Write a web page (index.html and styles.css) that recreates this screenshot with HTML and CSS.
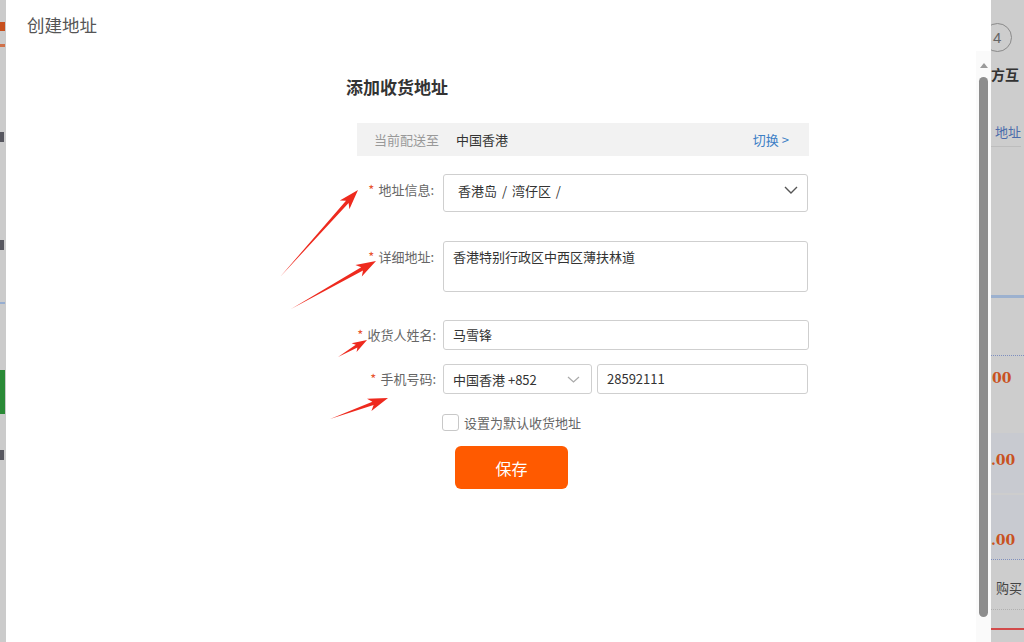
FILE: index.html
```html
<!DOCTYPE html>
<html lang="zh-CN">
<head>
<meta charset="utf-8">
<title>创建地址</title>
<link rel="stylesheet" href="styles.css">
</head>
<body>
<div class="page">
  <div class="bg-left">
    <div class="bl-orange1"></div>
    <div class="bl-orange2"></div>
    <div class="bl-mark bl-m1"></div>
    <div class="bl-mark bl-m2"></div>
    <div class="bl-blue"></div>
    <div class="bl-green"></div>
    <div class="bl-mark bl-m3"></div>
  </div>

  <div class="modal">
    <div class="modal-main">
      <div class="modal-title">创建地址</div>
      <div class="form">
        <h2 class="form-heading">添加收货地址</h2>
        <div class="ship-bar">
          <span class="ship-label">当前配送至</span>
          <span class="ship-value">中国香港</span>
          <span class="ship-switch">切换 &gt;</span>
        </div>

        <div class="row row-region">
          <label class="lbl"><span class="star">*</span>地址信息:</label>
          <div class="box box-select">
            <span class="region-text">香港岛 <span class="sep">/</span> 湾仔区 <span class="sep">/</span></span>
            <svg class="chev" width="14" height="8" viewBox="0 0 14 8"><path d="M1 1 L7 7 L13 1" fill="none" stroke="#555" stroke-width="1.4"/></svg>
          </div>
        </div>

        <div class="row row-detail">
          <label class="lbl"><span class="star">*</span>详细地址:</label>
          <div class="box box-area">香港特别行政区中西区薄扶林道</div>
        </div>

        <div class="row row-name">
          <label class="lbl"><span class="star">*</span>收货人姓名:</label>
          <div class="box box-input">马雪锋</div>
        </div>

        <div class="row row-phone">
          <label class="lbl"><span class="star">*</span>手机号码:</label>
          <div class="phone">
            <div class="box box-code">
              <span>中国香港 +852</span>
              <svg class="chev" width="13" height="7" viewBox="0 0 13 7"><path d="M1 1 L6.5 6 L12 1" fill="none" stroke="#aaa" stroke-width="1.2"/></svg>
            </div>
            <div class="box box-num">28592111</div>
          </div>
        </div>

        <div class="row row-check">
          <span></span>
          <div class="check-wrap"><span class="checkbox"></span><span class="check-text">设置为默认收货地址</span></div>
        </div>

        <div class="row row-btn">
          <span></span>
          <div><button class="save">保存</button></div>
        </div>
      </div>
    </div>
    <div class="scroll">
      <div class="scroll-arrow"></div>
      <div class="scroll-thumb"></div>
    </div>
  </div>

  <div class="bg-right">
    <div class="br-circle-row"><span class="br-circle">4</span></div>
    <div class="br-bold">方互</div>
    <div class="br-link">地址</div>
    <div class="br-line"></div>
    <div class="br-blueline"></div>
    <div class="br-dots br-dots1"></div>
    <div class="br-price br-p1">00</div>
    <div class="br-cell br-cell1"><span class="br-price">.00</span></div>
    <div class="br-cell br-cell2"><span class="br-price">.00</span></div>
    <div class="br-dots br-dots2"></div>
    <div class="br-buy">购买</div>
    <div class="br-dots br-dots3"></div>
    <div class="br-red"></div>
  </div>
</div>

<svg class="arrows" width="1024" height="642" viewBox="0 0 1024 642">
  <g fill="#ee2a1e">
    <polygon points="280,277 348.6,203.1 349.4,209.2 358,190 339.8,200.6 346.0,200.7"/>
    <polygon points="291,309 363.0,270.5 361.8,276.5 376,261 355.4,265.1 361.2,267.3"/>
    <polygon points="338,357 357.4,347.4 356.6,351.9 367,340 351.6,343.3 355.8,344.8"/>
    <polygon points="330,419 373.6,405.1 371.4,410.9 388,398 367.0,398.7 372.4,401.7"/>
  </g>
</svg>
</body>
</html>
```

FILE: styles.css
```css
* { box-sizing: border-box; }
html, body {
  margin: 0;
  padding: 0;
  width: 1024px;
  height: 642px;
  overflow: hidden;
}
body {
  font-family: "Noto Sans CJK SC", "Noto Sans", "Liberation Sans", sans-serif;
  color: #333;
  position: relative;
}
.page {
  display: flex;
  height: 642px;
  background: #cdcdcd;
}

/* left background strip */
.bg-left {
  width: 6px;
  flex: none;
  background: #cbcbcb;
  display: flex;
  flex-direction: column;
  overflow: hidden;
}
.bl-orange1 { width: 5px; height: 9px; margin-top: 22px; background: #c8501e; }
.bl-orange2 { width: 5px; height: 3px; margin-top: 13px; background: #d0714a; }
.bl-mark { width: 4px; height: 10px; background: #3a3a44; opacity: 0.8; }
.bl-m1 { margin-top: 85px; }
.bl-m2 { margin-top: 98px; }
.bl-blue { width: 5px; height: 2px; margin-top: 52px; background: #97aed0; }
.bl-green { width: 5px; height: 44px; margin-top: 66px; background: #2a8a36; }
.bl-m3 { margin-top: 36px; }

/* modal */
.modal {
  width: 985px;
  flex: none;
  background: #fff;
  display: flex;
}
.modal-main {
  flex: 1;
  padding: 14px 0 0 21px;
}
.modal-title {
  font-size: 17.5px;
  line-height: 22px;
  color: #555;
}
.form {
  margin-left: 319px;
  width: 464px;
}
.form-heading {
  margin: 39px 0 0 0;
  font-size: 17px;
  line-height: 24px;
  font-weight: bold;
  color: #333;
}
.ship-bar {
  margin: 24px 0 0 11px;
  width: 452px;
  height: 33px;
  background: #f2f2f2;
  display: flex;
  align-items: center;
  padding: 0 20px 0 17px;
  font-size: 13px;
}
.ship-label { color: #999; }
.ship-value { color: #333; margin-left: 17px; }
.ship-switch { color: #3d7fc6; margin-left: auto; }

.row {
  display: grid;
  grid-template-columns: 90px 366px;
  column-gap: 7px;
}
.lbl {
  text-align: right;
  font-size: 13px;
  line-height: 20px;
  color: #666;
  white-space: nowrap;
}
.star { color: #e8552f; margin-right: 4px; }
.row-region { margin-top: 18px; }
.row-region .lbl { padding-top: 6px; padding-right: 2px; }
.row-detail { margin-top: 29px; }
.row-detail .lbl { padding-top: 6px; padding-right: 2px; }
.row-name { margin-top: 28px; align-items: center; }
.row-name .lbl { margin-left: -10px; }
.row-phone { margin-top: 14px; align-items: center; }
.row-check { margin-top: 19px; }
.row-btn { margin-top: 14px; }

.box {
  border: 1px solid #cfcfcf;
  border-radius: 3px;
  font-size: 13px;
  color: #333;
  background: #fff;
}
.box-select {
  width: 365px;
  height: 38px;
  display: flex;
  align-items: center;
  padding: 0 9px 6px 14px;
}
.region-text { white-space: nowrap; }
.sep { margin: 0 2px; }
.chev { margin-left: auto; }
.box-area {
  width: 365px;
  height: 51px;
  padding: 5px 9px;
  line-height: 20px;
}
.box-input {
  width: 366px;
  height: 30px;
  line-height: 28px;
  padding: 0 9px;
}
.phone {
  display: flex;
  gap: 5px;
  width: 365px;
}
.box-code {
  width: 149px;
  height: 30px;
  display: flex;
  align-items: center;
  padding: 0 11px 0 9px;
}
.box-num {
  flex: 1;
  height: 30px;
  line-height: 28px;
  padding: 0 9px;
}
.check-wrap {
  display: flex;
  align-items: center;
  margin-left: -1px;
}
.checkbox {
  width: 17px;
  height: 17px;
  border: 1px solid #c8c8c8;
  border-radius: 3px;
  background: #fff;
}
.check-text {
  margin-left: 5px;
  font-size: 13px;
  color: #666;
}
.save {
  margin-left: 12px;
  width: 113px;
  height: 43px;
  border: none;
  border-radius: 6px;
  background: #ff5a00;
  color: #fff;
  font-family: inherit;
  font-size: 16px;
  padding: 0;
}

/* scrollbar */
.scroll {
  width: 15px;
  flex: none;
  margin-top: 51px;
  background: #fafafa;
  display: flex;
  flex-direction: column;
  align-items: center;
}
.scroll-arrow {
  margin-top: 12px;
  width: 0;
  height: 0;
  border-left: 4px solid transparent;
  border-right: 4px solid transparent;
  border-bottom: 5px solid #9a9a9a;
}
.scroll-thumb {
  margin-top: 9px;
  width: 9px;
  height: 540px;
  border-radius: 5px;
  background: #8d8d8d;
}

/* right background strip */
.bg-right {
  flex: 1;
  overflow: hidden;
  display: flex;
  flex-direction: column;
  background: #cdcdcd;
  position: relative;
}
.br-circle-row { height: 50px; padding-top: 23px; }
.br-circle {
  display: block;
  width: 29px;
  height: 29px;
  margin-left: -8px;
  border: 1px solid #8a8a8a;
  border-radius: 50%;
  font-family: "Liberation Sans", sans-serif;
  font-size: 15px;
  line-height: 27px;
  color: #666;
  padding-left: 9px;
}
.br-bold {
  margin-top: 14px;
  font-size: 14px;
  font-weight: bold;
  color: #333;
  line-height: 20px;
  white-space: nowrap;
}
.br-link {
  margin-top: 39px;
  font-size: 13px;
  color: #4b6cab;
  line-height: 18px;
  white-space: nowrap;
  margin-left: 4px;
}
.br-line { margin-top: 5px; height: 1px; width: 30px; background: #bdbdbd; }
.br-blueline { margin-top: 148px; height: 3px; background: #9cb1cf; }
.br-dots { height: 1px; border-top: 1px dotted #7e8fc0; }
.br-dots1 { margin-top: 57px; }
.br-price {
  font-family: "DejaVu Serif", "Liberation Serif", serif;
  font-weight: bold;
  font-size: 14px;
  color: #c9521f;
  line-height: 18px;
  white-space: nowrap;
}
.br-p1 { margin-top: 13px; margin-left: 1px; }
.br-cell {
  background: #c8cad0;
  margin-top: 3px;
}
.br-cell1 { margin-top: 46px; height: 60px; padding-top: 13px; margin-left: 0; }
.br-cell2 { height: 64px; padding-top: 31px; margin-top: 2px; }
.br-dots2 { margin-top: 0; }
.br-buy {
  margin-top: 19px;
  margin-left: 5px;
  font-size: 13px;
  color: #444;
  line-height: 18px;
  white-space: nowrap;
}
.br-dots3 { margin-top: 12px; border-top-color: #b0b0b0; }
.br-red { margin-top: 18px; height: 2px; background: #d24a4a; }

/* annotation arrows */
.arrows {
  position: absolute;
  left: 0;
  top: 0;
  pointer-events: none;
}
```
